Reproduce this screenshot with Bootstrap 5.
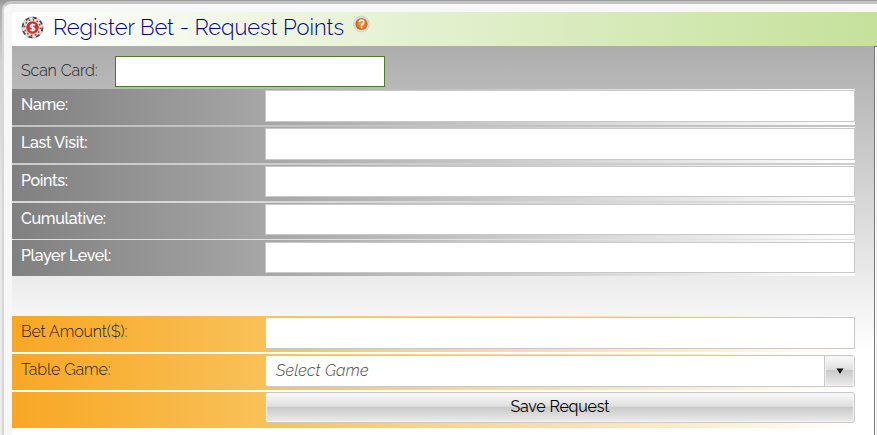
<!DOCTYPE html>
<html lang="en">
<head>
<meta charset="utf-8">
<meta name="viewport" content="width=device-width, initial-scale=1">
<title>Register Bet - Request Points</title>
<link href="https://cdn.jsdelivr.net/npm/bootstrap@5.3.0/dist/css/bootstrap.min.css" rel="stylesheet">
<style>
body{height:435px;overflow:hidden;font-family:Raleway,Lato,"Open Sans",sans-serif;font-size:16px;line-height:20px;color:#222;font-weight:300}
.stage{height:435px;padding-top:1px;background:linear-gradient(180deg,#999 0,#aaa 6px,#d0d0d0 60px,#e6e6e6 200px,#eee)}
.shell{height:440px;margin-left:2px;border:2px solid #d6d6d6;border-top:3px solid #c4c4c4;border-right:0;border-radius:9px 0 0 0;background:#f7f7f7;padding:8px 0 0 8px}
.title-bar{height:34px;border-radius:4px 0 0 4px;background:linear-gradient(90deg,#fff,#c5e19b);padding-left:9px}
.title-bar h1{font-size:22px;line-height:30px;color:#000080;font-weight:300;margin-left:9px;letter-spacing:-.07px}
.help{margin:1px 0 0 9px}
.panel{width:863px;height:400px;border-right:1px solid #777;background:linear-gradient(180deg,#adadad,#fff 305px)}
.side{border-top:1px solid #777;background:linear-gradient(90deg,#fff 1px,#eee 1px)}
.scan{height:43px;padding-left:9px}
.scan label{width:94px;padding-top:15px}
.scan input{width:270px;height:31px;margin-top:10px;border:1px solid #4b7d24;background:#fff}
label{letter-spacing:-.13px}
.line{width:843px;height:36px;margin-bottom:2px;padding-left:9px}
.line label{width:244px;padding-top:6px}
.info{background:linear-gradient(90deg,#808080,#fff);color:#fff;font-weight:500}
.info label{letter-spacing:-.36px}
.bet{background:linear-gradient(90deg,#f8a724 0,#f8c158 30%,#fbd07d 46%,#fdeccb 80%,#fff)}
.field{width:590px;height:32px;margin-top:1px;border:1px solid #c8c8c8;background:#fff;border-radius:0}
.short{height:31px}
.last-info{height:36px;margin-top:-1px;margin-bottom:40px}
.last-info .field{margin-top:2px}
.gloss{background:linear-gradient(180deg,#fafafa 0,#dedede 46%,#c9c9c9 48%,#ececec 100%);box-shadow:inset 0 0 0 1px #f4f4f4}
.combo{border-radius:3px;padding-left:10px;font-style:italic;color:#444}
.combo-text{padding-top:5px;letter-spacing:.2px}
.arrow{width:30px;border-left:1px solid #c8c8c8}
.save{height:31px;margin-top:0;border-radius:3px;color:#000;padding:0 0 2px;letter-spacing:-.2px}
</style>
</head>
<body>
<div class="stage"><main class="shell">
<header class="title-bar d-flex">
<svg class="mt-1" width="23" height="23" viewBox="0 0 23 23" aria-hidden="true">
<circle cx="11.5" cy="11.5" r="10.6" fill="#e6e6e6" stroke="#999" stroke-width=".6"/><circle cx="11.5" cy="11.5" r="9.9" fill="none" stroke="#444" stroke-width="1.7" stroke-dasharray="4 3.78"/>
<circle cx="11.5" cy="11.5" r="7.8" fill="none" stroke="#a8443f" stroke-width="1.6" stroke-dasharray="1.7 2.38"/><circle cx="11.5" cy="11.5" r="6.2" fill="#d92c27"/>
<path d="M13.8 9.3c-.8-1.3-4.4-1.2-4.4.6 0 2.2 4.4 1 4.4 3.2 0 1.8-3.6 1.9-4.6.5M11.5 7.4v8.2" fill="none" stroke="#fff" stroke-width="1.5"/></svg>
<h1 class="mb-0">Register Bet - Request Points</h1>
<svg class="help" width="18" height="20" viewBox="0 0 18 20" aria-label="Help">
<defs><radialGradient id="orb"><stop stop-color="#f7a04a"/><stop offset=".6" stop-color="#ed7d1d"/><stop offset="1" stop-color="#b95b1c"/></radialGradient></defs>
<circle cx="8.5" cy="11" r="7.8" fill="#e2e2e0" stroke="#cfd2cc"/><circle cx="8.5" cy="11" r="6.1" fill="url(#orb)"/>
<path d="M6.3 9.2c0-2.8 4.7-2.6 4.5 0-.1 1.6-2.2 1.5-2.2 3.2M8.6 13.6v1.6" fill="none" stroke="#fff" stroke-width="1.7"/></svg>
</header>
<div class="d-flex">
<section class="panel flex-shrink-0">
<div class="scan d-flex"><label for="scan">Scan Card:</label><input id="scan" type="text"></div>
<div class="line info d-flex"><label for="name">Name:</label><input class="field" id="name"></div>
<div class="line info d-flex"><label for="visit">Last Visit:</label><input class="field" id="visit"></div>
<div class="line info d-flex"><label for="points">Points:</label><input class="field short" id="points"></div>
<div class="line info d-flex"><label for="total">Cumulative:</label><input class="field short" id="total"></div>
<div class="line info last-info d-flex"><label for="level">Player Level:</label><input class="field short" id="level"></div>
<div class="line bet d-flex"><label for="amount">Bet Amount($):</label><input class="field" id="amount"></div>
<div class="line bet d-flex"><label>Table Game:</label><div class="field combo d-flex"><span class="combo-text flex-grow-1">Select Game</span><span class="arrow gloss d-flex align-items-center justify-content-center"><svg width="8" height="6" viewBox="0 0 8 6"><path d="M.5.5h7L4 5.8z"/></svg></span></div></div>
<div class="line bet d-flex"><label></label><button class="field save gloss" type="button">Save Request</button></div>
</section>
<div class="side flex-grow-1"></div>
</div>
</main></div>
<script src="https://cdn.jsdelivr.net/npm/bootstrap@5.3.0/dist/js/bootstrap.bundle.min.js"></script>
</body>
</html>
